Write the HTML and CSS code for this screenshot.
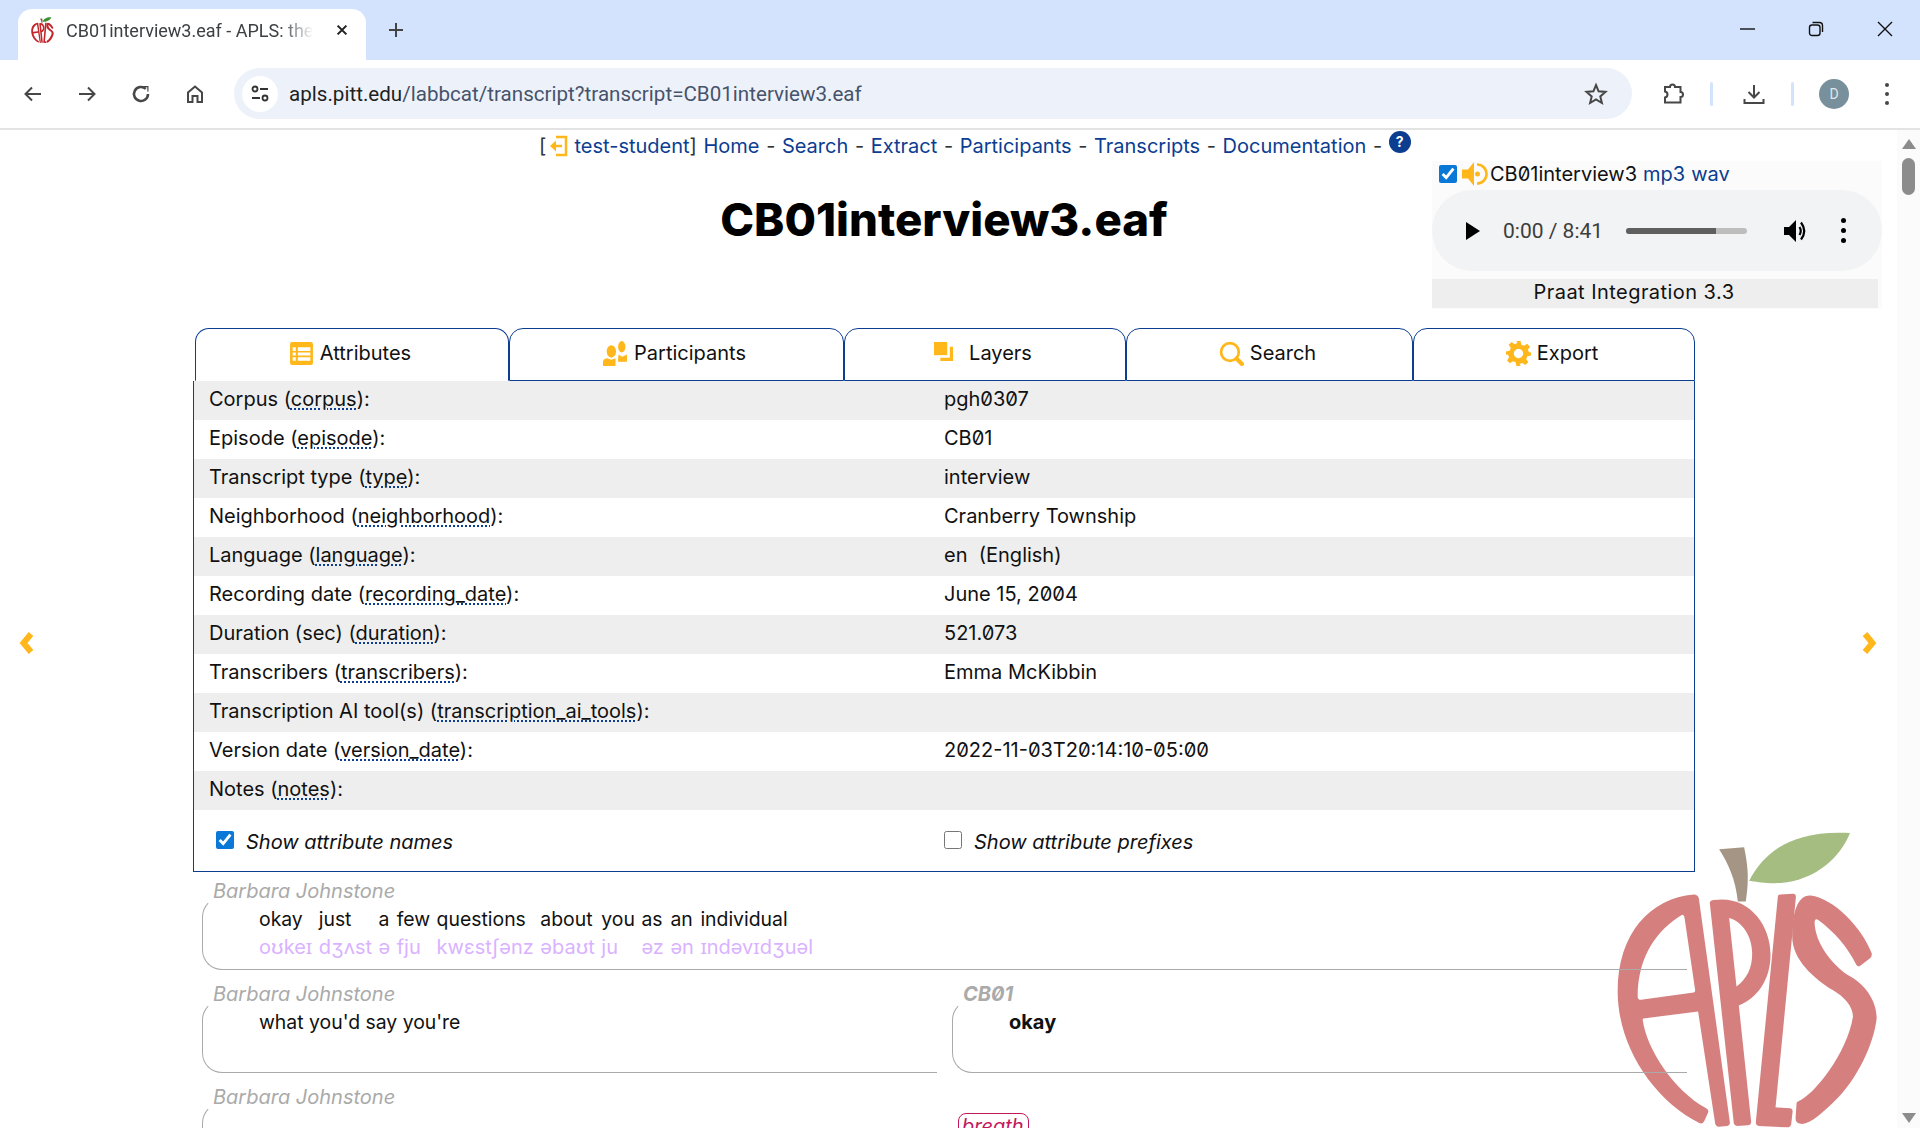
FILE: index.html
```html
<!DOCTYPE html>
<html lang="en">
<head>
<meta charset="utf-8">
<title>CB01interview3.eaf - APLS</title>
<link rel="stylesheet" href="styles.css">
</head>
<body>
<svg class="defs" width="0" height="0">
  <symbol id="apple" viewBox="170 88 782 896">
    <path fill="var(--leaf,#a6bd82)" d="M566 243C610 160 690 90 868 100C840 170 770 240 660 250C625 252 590 247 566 243Z"/>
    <path fill="var(--stem,#a59585)" d="M476 149L551 143C560 190 568 230 556 305L532 305C525 240 505 195 476 149Z"/>
    <path fill-rule="evenodd" d="M400 284C270 295 172 400 172 575C172 740 280 900 418 970Q428 972 432 962L444 935Q444 928 436 924C340 870 260 750 247 660Q246 655 255 655L413 635L464 970Q466 980 475 980L500 978Q510 976 508 965L415 295Q412 284 400 284ZM365 345C290 390 232 470 232 590Q232 600 242 600L400 578Q405 577 404 570L372 352Q370 345 365 345Z"/>
    <path fill-rule="evenodd" d="M448 310Q448 302 460 301C560 285 630 370 630 465C630 540 590 595 535 617L572 965Q572 975 562 976L530 978Q522 978 520 970ZM506 355L528 560C560 535 575 505 575 460C575 410 545 365 506 355Z"/>
    <path d="M652 290Q652 284 660 284L698 282Q706 282 706 292L645 922L688 925Q697 926 696 936L692 972Q690 982 680 982L595 978Q585 976 586 966Z"/>
    <path d="M750 287C820 295 905 385 933 460Q935 470 928 475L900 497Q892 503 887 495C860 440 820 395 772 360Q762 355 762 370C765 430 810 490 860 525C910 550 948 600 948 655C940 730 890 840 820 905C790 935 750 970 725 972Q705 972 705 955L708 910Q708 905 715 903C760 885 860 760 877 650C877 620 850 590 815 570C760 535 695 480 695 410C695 340 710 285 750 287Z"/>
  </symbol>
</svg>

<header class="tabstrip">
  <div class="browser-tab">
    <svg class="favicon"><use href="#apple"/></svg>
    <span class="browser-tab-title">CB01interview3.eaf - APLS: the Archive</span>
    <svg class="tab-close" viewBox="0 0 16 16"><path d="M3 3L13 13M13 3L3 13"/></svg>
  </div>
  <svg class="new-tab" viewBox="0 0 16 16"><path d="M8 1V15M1 8H15"/></svg>
  <div class="window-controls">
    <svg class="win" viewBox="0 0 16 16"><path d="M1 8H16"/></svg>
    <svg class="win" viewBox="0 0 16 16"><rect x="1.5" y="4" width="10.5" height="10.5" rx="2.5"/><path d="M4.5 1.5H11.5Q14.5 1.500 14.500 4.500V11"/></svg>
    <svg class="win" viewBox="0 0 16 16"><path d="M1 1L15 15M15 1L1 15"/></svg>
  </div>
</header>

<nav class="toolbar">
  <svg class="tool" viewBox="0 0 24 24"><path d="M20 12H5M11 5.500L4.500 12L11 18.500"/></svg>
  <svg class="tool" viewBox="0 0 24 24"><path d="M4 12H19M13 5.500L19.500 12L13 18.500"/></svg>
  <svg class="tool thick" viewBox="0 0 24 24"><path d="M19 12A7 7 0 1 1 16.800 6.900"/><path class="solid" d="M14 4H19.500V9.500H18.300V5.200H14Z"/></svg>
  <svg class="tool" viewBox="0 0 24 24"><path d="M5 20V10.500L12 4.500L19 10.500V20H14.500V14H9.500V20Z"/></svg>
  <div class="omnibox">
    <span class="site-icon">
      <svg viewBox="0 0 20 20"><circle cx="5" cy="5" r="2.500"/><path d="M10 5H18M2 14H10"/><circle cx="15" cy="14" r="2.500"/></svg>
    </span>
    <span class="url"><b>apls.pitt.edu</b>/labbcat/transcript?transcript=CB01interview3.eaf</span>
    <svg class="star" viewBox="0 0 24 24"><path d="M12 3L14.600 9.300L21.500 9.900L16.300 14.400L17.900 21L12 17.500L6.100 21L7.700 14.400L2.500 9.900L9.400 9.300Z"/></svg>
  </div>
  <svg class="tool ext" viewBox="0 0 24 24"><path d="M4 5H9Q9 2.500 11.500 2.500Q14 2.500 14 5H19.500V10Q22 10 22 12.500Q22 15 19.500 15V20.500H4V15.500Q6.500 15 6.500 12.500Q6.500 10 4 9.500Z"/></svg>
  <span class="tool-sep"></span>
  <svg class="tool dl" viewBox="0 0 24 24"><path d="M12 3V15M6.500 10L12 15.500L17.500 10M2.500 17V21H21.500V17"/></svg>
  <span class="tool-sep"></span>
  <span class="avatar">D</span>
  <span class="kebab"><i></i><i></i><i></i></span>
</nav>

<div class="viewport">
  <svg class="logo"><use href="#apple"/></svg>

  <div class="page">
    <div class="site-nav">
      <span>[</span>
      <svg class="ico-logout" viewBox="0 0 20 22"><path d="M8 2H18V20H8M14 11H4"/><path class="solid" d="M8 5.500V16.500L2 11Z"/></svg>
      <span><a href="#">test-student</a>]</span>
      <a href="#">Home</a><span>-</span>
      <a href="#">Search</a><span>-</span>
      <a href="#">Extract</a><span>-</span>
      <a href="#">Participants</a><span>-</span>
      <a href="#">Transcripts</a><span>-</span>
      <a href="#">Documentation</a><span>-</span>
      <span class="help">?</span>
    </div>

    <h1 class="title">CB01interview3.eaf</h1>

    <main class="content">
      <div class="tabs">
        <div class="tab tab-attrs active">
          <svg class="tab-ico" viewBox="0 0 24 24"><path class="y" fill-rule="evenodd" d="M3 1H21Q23 1 23 3V21Q23 23 21 23H3Q1 23 1 21V3Q1 1 3 1ZM3.500 6V9.500H6.500V6ZM8.500 6V9.500H20.500V6ZM3.500 11V14H6.500V11ZM8.500 11V14H20.500V11ZM3.500 15.500V19H6.500V15.500ZM8.500 15.500V19H20.500V15.500Z"/></svg>
          Attributes
        </div>
        <div class="tab tab-parts">
          <svg class="tab-ico" viewBox="0 0 24 24"><ellipse class="y" cx="8" cy="10" rx="4.500" ry="6"/><path class="y" d="M0 24V20Q0 17 4 16.500L8 18L12 16.500V24Z"/><ellipse class="y" cx="18" cy="5.500" rx="3.500" ry="5.500"/><path class="y" d="M15 13L18.500 15L23 13V20H14.500V17Z"/></svg>
          Participants
        </div>
        <div class="tab tab-layers">
          <svg class="tab-ico small" viewBox="0 0 18 18"><rect class="y" x="0" y="0" width="12.500" height="12.500"/><path class="y" d="M15 4.500H18V18H6V15H15Z"/></svg>
          Layers
        </div>
        <div class="tab tab-search">
          <svg class="tab-ico" viewBox="0 0 24 24"><circle class="ystroke" cx="10.500" cy="10.500" r="8.500"/><path class="ystroke thick" d="M17 17L22 22"/></svg>
          Search
        </div>
        <div class="tab tab-export">
          <svg class="tab-ico" viewBox="0 0 24 24"><path class="y" fill-rule="evenodd" d="M10 0H14L14.700 3.500L17.300 4.600L20.300 2.600L23 5.400L21 8.300L22.100 10.900L24 11V14L20.500 14.700L19.400 17.300L21.400 20.300L18.600 23L15.700 21L13.100 22.100L14 24H10L9.300 20.500L6.700 19.400L3.700 21.400L1 18.600L3 15.700L1.900 13.100L0 13V10L3.500 9.300L4.600 6.700L2.600 3.700L5.400 1L8.300 3L10.900 1.900ZM12 7.500A4.500 4.500 0 1 0 12.001 7.500Z"/></svg>
          Export
        </div>
      </div>

      <section class="attrs">
        <div class="attr"><span>Corpus (<u>corpus</u>):</span><span>pgh0307</span></div>
        <div class="attr"><span>Episode (<u>episode</u>):</span><span>CB01</span></div>
        <div class="attr"><span>Transcript type (<u>type</u>):</span><span>interview</span></div>
        <div class="attr"><span>Neighborhood (<u>neighborhood</u>):</span><span>Cranberry Township</span></div>
        <div class="attr"><span>Language (<u>language</u>):</span><span>en &nbsp;(English)</span></div>
        <div class="attr"><span>Recording date (<u>recording_date</u>):</span><span>June 15, 2004</span></div>
        <div class="attr"><span>Duration (sec) (<u>duration</u>):</span><span>521.073</span></div>
        <div class="attr"><span>Transcribers (<u>transcribers</u>):</span><span>Emma McKibbin</span></div>
        <div class="attr"><span>Transcription AI tool(s) (<u>transcription_ai_tools</u>):</span><span></span></div>
        <div class="attr"><span>Version date (<u>version_date</u>):</span><span>2022-11-03T20:14:10-05:00</span></div>
        <div class="attr"><span>Notes (<u>notes</u>):</span><span></span></div>
        <div class="attr-options">
          <label class="opt"><input type="checkbox" checked> Show attribute names</label>
          <label class="opt opt-second"><input type="checkbox"> Show attribute prefixes</label>
        </div>
      </section>

      <section class="transcript">
        <div class="turn">
          <div class="speaker">Barbara Johnstone</div>
          <div class="bubble">
            <div class="words">
              <div class="word"><span>okay</span><span class="phon">oʊkeɪ</span></div>
              <div class="word"><span>just</span><span class="phon">dʒʌst</span></div>
              <div class="word"><span>a</span><span class="phon">ə</span></div>
              <div class="word"><span>few</span><span class="phon">fju</span></div>
              <div class="word"><span>questions</span><span class="phon">kwɛstʃənz</span></div>
              <div class="word"><span>about</span><span class="phon">əbaʊt</span></div>
              <div class="word"><span>you</span><span class="phon">ju</span></div>
              <div class="word"><span>as</span><span class="phon">əz</span></div>
              <div class="word"><span>an</span><span class="phon">ən</span></div>
              <div class="word"><span>individual</span><span class="phon">ɪndəvɪdʒuəl</span></div>
            </div>
          </div>
        </div>
        <div class="turn turn-split">
          <div>
            <div class="speaker">Barbara Johnstone</div>
            <div class="bubble"><div class="words"><div class="word"><span>what you'd say you're</span></div></div></div>
          </div>
          <div>
            <div class="speaker speaker-code">CB01</div>
            <div class="bubble"><div class="words"><div class="word strong"><span>okay</span></div></div></div>
          </div>
        </div>
        <div class="turn turn-split">
          <div>
            <div class="speaker">Barbara Johnstone</div>
            <div class="bubble"></div>
          </div>
          <div><span class="noise">breath</span></div>
        </div>
      </section>
    </main>
  </div>

  <aside class="media">
    <div class="media-head">
      <input type="checkbox" checked>
      <svg class="ico-speaker" viewBox="0 0 26 26"><path class="y" d="M0 8.500H6L12 1V25L6 17.500H0Z"/><path class="ystroke" d="M15 3.500A9.500 9.500 0 0 1 15 22.500"/><circle class="y" cx="15.500" cy="13" r="2.500"/></svg>
      <span>CB01interview3</span> <a href="#">mp3</a> <a href="#">wav</a>
    </div>
    <div class="player">
      <svg class="play" viewBox="0 0 14 18"><path d="M0 0L14 9L0 18Z"/></svg>
      <span class="time">0:00 / 8:41</span>
      <span class="track"><span class="track-fill"></span></span>
      <svg class="vol" viewBox="0 0 24 24"><path class="solid" d="M0 8H5L12 1V23L5 16H0Z"/><path class="line" d="M15.500 8Q18 12 15.500 16M17 3.500Q23.500 12 17 20.500"/></svg>
      <span class="kebab dark"><i></i><i></i><i></i></span>
    </div>
    <div class="praat">Praat Integration 3.3</div>
  </aside>

  <svg class="edge-arrow left" viewBox="0 0 18 24"><path d="M13 3L5.500 12L13 21"/></svg>
  <svg class="edge-arrow right" viewBox="0 0 18 24"><path d="M5 3L12.500 12L5 21"/></svg>

  <div class="scrollbar">
    <span class="sb-up"></span>
    <span class="sb-thumb"></span>
    <span class="sb-down"></span>
  </div>
</div>
</body>
</html>
```
FILE: styles.css
```css
* { box-sizing: border-box; }
html, body { margin: 0; height: 1128px; overflow: hidden; background: #fff; }
body { font-family: Inter, "Noto Sans", "DejaVu Sans", sans-serif; font-size: 20px; color: #111; }
.defs { position: absolute; }

/* browser chrome */
.tabstrip { height: 60px; background: #d3e3fd; display: flex; align-items: flex-end; padding-left: 18px; position: relative; }
.browser-tab { width: 348px; height: 51px; background: #fff; border-radius: 14px 14px 0 0; display: flex; align-items: center; padding: 0 14px 9px 13px; font: 18px "Roboto", sans-serif; color: #3c4043; }
.favicon { width: 23px; height: 26px; color: #c3262b; fill: currentColor; flex: none; --leaf: #3f8f2f; --stem: #7a5a3a; }
.browser-tab-title { margin-left: 12px; flex: 1; white-space: nowrap; overflow: hidden; -webkit-mask-image: linear-gradient(90deg, #000 84%, transparent 97%); mask-image: linear-gradient(90deg, #000 84%, transparent 97%); }
.tab-close { width: 14px; height: 14px; margin-left: 14px; margin-right: 3px; fill: none; stroke: #222; stroke-width: 2.4; flex: none; }
.new-tab { width: 16px; height: 16px; margin: 0 0 22px 22px; fill: none; stroke: #444; stroke-width: 2; flex: none; }
.window-controls { margin-left: auto; display: flex; gap: 53px; padding-right: 27px; align-self: flex-start; margin-top: 21px; }
.win { width: 16px; height: 16px; fill: none; stroke: #111; stroke-width: 1.400; }

.toolbar { height: 70px; background: #fff; border-bottom: 2px solid #e3e3e3; display: flex; align-items: center; padding: 0 21px 1px 21px; }
.tool { width: 24px; height: 24px; margin-right: 30px; fill: none; stroke: #474747; stroke-width: 2; flex: none; }
.tool.thick { stroke-width: 2.600; }
.tool .solid { fill: #474747; stroke: none; }
.omnibox { width: 1398px; height: 51px; background: #edf2fa; border-radius: 26px; margin-left: -3px; display: flex; align-items: center; padding: 0 24px 0 8px; flex: none; }
.site-icon { width: 36px; height: 36px; border-radius: 50%; background: #fff; display: flex; align-items: center; justify-content: center; flex: none; }
.site-icon svg { width: 20px; height: 20px; fill: none; stroke: #333; stroke-width: 1.800; }
.url { margin-left: 11px; font: 20.6px Roboto, sans-serif; color: #47536b; flex: 1; }
.url b { font-weight: 400; color: #1f1f1f; }
.star { width: 24px; height: 24px; fill: none; stroke: #474747; stroke-width: 2; flex: none; }
.ext { margin-left: 29px; margin-right: 0; }
.tool-sep { width: 3px; height: 24px; background: #d3e3fd; margin: 0 0 0 25px; flex: none; border-radius: 2px; }
.dl { margin: 0 0 0 29px; }
.avatar { width: 30px; height: 30px; border-radius: 50%; background: #78909c; color: #dfe7ea; font: 14px/30px Roboto, sans-serif; text-align: center; margin-left: 25px; flex: none; }
.kebab { display: flex; flex-direction: column; gap: 5px; margin-left: 36px; flex: none; }
.kebab i { width: 4px; height: 4px; border-radius: 50%; background: #474747; }

/* page */
.viewport { position: relative; height: 998px; overflow: hidden; }
.page { position: relative; z-index: 1; }
.site-nav { display: flex; gap: 6.6px; align-items: center; height: 32px; padding-left: 539px; white-space: nowrap; color: #333; }
.site-nav a, .media a { color: #0b3d91; text-decoration: none; }
.ico-logout { width: 20px; height: 22px; margin-left: -5px; fill: none; stroke: #ffb71c; stroke-width: 2.500; flex: none; }
.ico-logout .solid { fill: #ffb71c; stroke: none; }
.help { width: 22px; height: 22px; border-radius: 50%; background: #0b3d91; color: #fff; font-size: 14px; font-weight: 700; line-height: 22px; text-align: center; margin-bottom: 8px; }
.title { margin: 0; padding: 22px 0 0 0; height: 166px; width: 1888px; text-align: center; font-size: 45.6px; line-height: 72px; font-weight: 800; color: #000; }
.content { margin-left: 193px; width: 1502px; }
.tabs { display: flex; padding-left: 2px; height: 53px; }
.tab { border: 1px solid #0b3d91; border-radius: 14px 14px 0 0; display: flex; align-items: center; justify-content: center; gap: 6px; padding: 0 4px 3px 0; flex: none; }
.tab.active { border-bottom-color: transparent; }
.tab-attrs { width: 314px; }
.tab-parts { width: 335px; }
.tab-layers { width: 282px; }
.tab-search { width: 287px; }
.tab-export { width: 282px; }
.tab-ico { width: 25px; height: 25px; flex: none; }
.tab-ico.small { width: 19px; height: 19px; margin: -4px 10px 0 0; }
.y { fill: #ffb71c; }
.ystroke { fill: none; stroke: #ffb71c; stroke-width: 2.600; }
.ystroke.thick { stroke-width: 4; stroke-linecap: round; }

.attrs { border: 1px solid #0b3d91; border-top: 0; height: 491px; }
.attr { display: grid; grid-template-columns: 735px 1fr; height: 39px; align-items: center; padding: 0 0 4px 15px; font-feature-settings: "zero"; }
.attr:nth-child(odd) { background: #eee; }
.attr u { text-decoration: underline dotted #0b3d91 2px; text-underline-offset: 3px; }
.attr > span:first-child { font-feature-settings: normal; }
.attr-options { display: grid; grid-template-columns: 728px 1fr; padding: 20px 0 0 22px; font-style: italic; }
.opt { display: flex; align-items: center; gap: 12px; }
.opt input { width: 18px; height: 18px; margin: -4px 0 0; accent-color: #0a78d6; flex: none; }

.transcript { padding: 0 8px 0 9px; }
.turn { margin-bottom: 5px; padding-top: 8px; }
.turn-split { display: grid; grid-template-columns: 735px 735px; column-gap: 15px; }
.speaker { height: 22px; line-height: 23px; padding-left: 11px; color: #aaa; font-style: italic; }
.speaker-code { font-weight: 700; font-feature-settings: "zero"; }
.bubble { height: 73px; margin-top: -5px; border: 1px solid #aaa; border-top-color: transparent; border-right: 0; border-radius: 20px 0 0 20px; padding: 7px 0 0 56px; }
.words { display: flex; column-gap: 6.5px; }
.word { display: flex; flex-direction: column; line-height: 28px; white-space: nowrap; font-size: 19.4px; }
.word.strong { font-size: 20px; font-weight: 700; }
.phon { color: #d9b3ff; font-size: 20px; }
.noise { display: inline-block; margin: 27px 0 0 6px; width: 71px; height: 34px; border: 1px solid #c2185b; border-radius: 8px; color: #c2185b; font-style: italic; padding-left: 3px; line-height: 24px; }

.logo { position: absolute; left: 1617px; top: 698px; width: 261px; height: 301px; color: #d67f7f; fill: currentColor; z-index: 0; }

.media { position: absolute; z-index: 2; left: 1432px; top: 31px; width: 450px; height: 148px; background: #fbfbfb; }
.media-head { display: flex; align-items: center; height: 29px; padding: 0 0 3px 7px; gap: 6px; white-space: nowrap; font-feature-settings: "zero"; }
.media-head input { width: 18px; height: 18px; margin: 0; accent-color: #0a78d6; flex: none; }
.ico-speaker { width: 26px; height: 26px; margin: 0 -4px 0 -1px; flex: none; }
.player { height: 81px; background: #f1f3f4; border-radius: 41px; display: flex; align-items: center; padding-left: 34px; }
.play { width: 14px; height: 18px; fill: #000; flex: none; }
.time { margin-left: 23px; width: 98px; color: #3d3d3d; white-space: nowrap; font-size: 21px; font-family: Roboto, sans-serif; }
.track { margin-left: 25px; width: 121px; height: 6px; border-radius: 3px; background: #bdbdbd; overflow: hidden; flex: none; }
.track-fill { display: block; width: 90px; height: 6px; background: #5f5f5f; }
.vol { width: 24px; height: 24px; margin-left: 37px; flex: none; }
.vol .solid { fill: #000; }
.vol .line { fill: none; stroke: #000; stroke-width: 2.200; }
.kebab.dark { margin-left: 33px; }
.kebab.dark i { width: 5px; height: 5px; background: #000; }
.praat { margin-top: 8px; width: 446px; height: 29px; background: #eee; text-align: center; line-height: 27px; padding-right: 42px; letter-spacing: .45px; }

.edge-arrow { position: absolute; top: 501px; width: 18px; height: 24px; fill: none; stroke: #ffb71c; stroke-width: 6; z-index: 2; }
.edge-arrow.left { left: 18px; }
.edge-arrow.right { left: 1860px; }

.scrollbar { position: absolute; z-index: 3; right: 0; top: 0; bottom: 0; width: 23px; background: #fbfbfb; display: flex; flex-direction: column; align-items: center; }
.sb-up { margin-top: 9px; width: 0; height: 0; border: 7px solid transparent; border-top: 0; border-bottom: 10px solid #8c8c8c; }
.sb-thumb { margin-top: 9px; width: 13px; height: 37px; border-radius: 7px; background: #8c8c8c; }
.sb-down { margin-top: auto; margin-bottom: 5px; width: 0; height: 0; border: 7px solid transparent; border-bottom: 0; border-top: 10px solid #8c8c8c; }
```
